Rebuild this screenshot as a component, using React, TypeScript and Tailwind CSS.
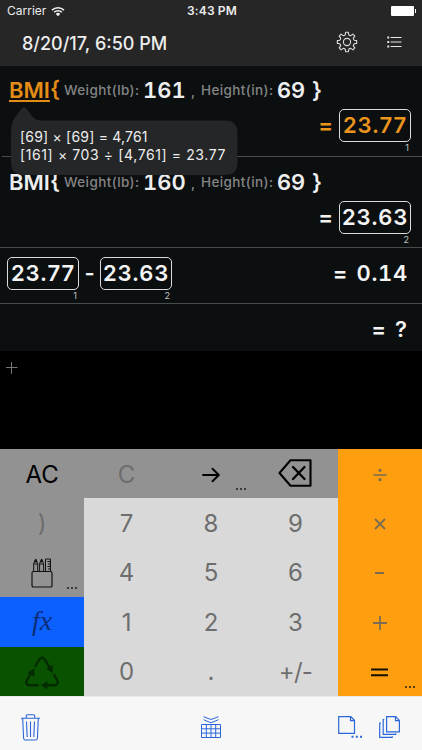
import type { ReactNode } from "react";

function Wifi() {
  return (
    <svg width="14" height="11" viewBox="0 0 14 11" fill="none" stroke="#f2f2f2" strokeWidth="1.5">
      <path d="M1 4.1a8.6 8.6 0 0 1 12 0" />
      <path d="M3.1 6.3a5.6 5.6 0 0 1 7.8 0" />
      <path d="M7 10.2 4.8 7.9a3.2 3.2 0 0 1 4.4 0z" fill="#f2f2f2" stroke="none" />
    </svg>
  );
}

function Gear() {
  const teeth: string[] = [];
  for (let i = 0; i < 8; i++) {
    const at = (r: number, deg: number) => {
      const a = ((i * 45 + deg - 90) * Math.PI) / 180;
      return `${(11 + r * Math.cos(a)).toFixed(2)} ${(11 + r * Math.sin(a)).toFixed(2)}`;
    };
    teeth.push(`${at(7.4, -14)} L${at(9.8, -8)} L${at(9.8, 8)} L${at(7.4, 14)} Q${at(6.9, 22.5)} ${at(7.4, 31)}`);
  }
  return (
    <svg className="mb-[2px]" width="22" height="22" viewBox="0 0 22 22" fill="none" stroke="#dedede" strokeWidth="1.1" strokeLinejoin="round">
      <path d={`M${teeth.join(" L")}Z`} />
      <circle cx="11" cy="11" r="3.6" />
    </svg>
  );
}

function ListIcon() {
  return (
    <svg className="mb-[2px]" width="15" height="12" viewBox="0 0 15 12" stroke="#e6e6e6" strokeWidth="1.1">
      <path d="M3.6 1.5H14.5M3.6 6H14.5M3.6 10.5H14.5" />
      <path d="M.3 1.5h1.9M.3 6h1.9M.3 10.5h1.9" strokeWidth="1.9" />
    </svg>
  );
}

function Result({ value, index, orange = false }: { value: string; index: string; orange?: boolean }) {
  return (
    <div className="relative flex h-[33px] w-[72px] items-center justify-center rounded-[5px] border border-[#dcdcdc]">
      <span className={`whitespace-nowrap text-[22px] font-semibold tracking-[0.9px] ${orange ? "text-[#ec951e]" : "text-[#f4f4f4]"}`}>{value}</span>
      <span className="absolute right-[1px] top-[32px] text-[9px] leading-[11px] text-[#c4c4c4]">{index}</span>
    </div>
  );
}

function Formula({ weight, active = false }: { weight: string; active?: boolean }) {
  return (
    <div className="flex h-[30px] items-center whitespace-nowrap pl-[9px] text-[22px] font-semibold text-[#eeeeee]">
      <span className={`w-[55px] ${active ? "text-[#e58c16]" : ""}`}>
        <span className={active ? "underline decoration-[1.5px] underline-offset-[2px]" : ""}>BMI</span>{"{"}
      </span>
      <span className="w-[79px] text-[13.5px] font-medium tracking-[0.4px] text-[#858585]">Weight(lb):</span>
      <span className="w-[48px] tabular-nums">{weight}</span>
      <span className="w-[10px] text-[14px] font-normal text-[#9a9a9a]">,</span>
      <span className="w-[75px] text-[13.5px] font-medium tracking-[0.4px] text-[#858585]">Height(in):</span>
      <span className="w-[36px] pl-px">69</span>
      <span>{"}"}</span>
    </div>
  );
}

function Equals({ orange = false }: { orange?: boolean }) {
  return <span className={`text-[22px] font-semibold ${orange ? "text-[#ec951e]" : "text-[#f4f4f4]"}`}>=</span>;
}

function Key({ children, tone = "", dots = false }: { children: ReactNode; tone?: string; dots?: boolean }) {
  return (
    <div className={`relative flex items-center justify-center pt-[2px] text-[24px] ${tone}`}>
      {children}
      {dots && (
        <svg className="absolute bottom-[8px] right-[7px]" width="10" height="2" viewBox="0 0 10 2" fill="#111">
          <circle cx="1" cy="1" r=".9" /><circle cx="5" cy="1" r=".9" /><circle cx="9" cy="1" r=".9" />
        </svg>
      )}
    </div>
  );
}

const grey = "bg-[#929292] text-[#6d6d6d]";
const light = "bg-[#d9d9d9] text-[#6e6e6e]";
const amber = "bg-[#ff9f10] text-[#7c6c50]";

function Keypad() {
  return (
    <div className="grid h-[247px] grid-cols-5 grid-rows-5">
      <Key tone="bg-[#929292] text-black">AC</Key>
      <Key tone={grey}>C</Key>
      <Key tone={grey} dots>
        <svg width="18" height="16" viewBox="0 0 18 16" fill="none" stroke="#000" strokeWidth="1.9" strokeLinecap="round" strokeLinejoin="round"><path d="M1 8H16.5M10.5 1.8 16.8 8l-6.3 6.2" /></svg>
      </Key>
      <Key tone={grey}>
        <svg className="mb-[3px]" width="34" height="28" viewBox="0 0 34 28" fill="none" stroke="#000" strokeWidth="2.1" strokeLinecap="round" strokeLinejoin="round"><path d="M12.5 1.2H32.5V26.8H12.5L1.5 14Z" /><path d="m15 8 11.5 12M26.5 8 15 20" strokeWidth="2.3" /></svg>
      </Key>
      <Key tone={amber}>
        <svg width="14" height="14" viewBox="0 0 14 14" fill="#7c6c50"><path d="M.5 6.2h13v1.6H.5z" /><circle cx="7" cy="2.3" r="1.6" /><circle cx="7" cy="11.7" r="1.6" /></svg>
      </Key>

      <Key tone={grey}>)</Key>
      <Key tone={light}>7</Key>
      <Key tone={light}>8</Key>
      <Key tone={light}>9</Key>
      <Key tone={amber}>
        <svg width="12" height="12" viewBox="0 0 12 12" stroke="#7c6c50" strokeWidth="1.9"><path d="m1 1 10 10M11 1 1 11" /></svg>
      </Key>

      <Key tone={grey} dots>
        <svg width="22" height="30" viewBox="0 0 22 30" fill="none" stroke="#111" strokeWidth="1.2">
          <rect x="1" y="13.5" width="20" height="15.5" rx="1.6" />
          <path d="M2.7 13.5V5.5L4.7 1l2 4.5v8M8.6 13.5V5.5l2-4.5 2 4.5v8M2.7 6h4M8.6 6h4M14.5 13.5V1h5v12.5M16.5 3.5h3M17 6h2.5M16.5 8.5h3M17 11h2.5" strokeWidth="1" />
          <path d="m3.7 4 1-3 1 3zM9.6 4l1-3 1 3z" fill="#111" strokeWidth=".7" />
        </svg>
      </Key>
      <Key tone={light}>4</Key>
      <Key tone={light}>5</Key>
      <Key tone={light}>6</Key>
      <Key tone={amber}><span className="h-[2px] w-[9px] bg-[#7c6c50]" /></Key>

      <Key tone="bg-[#0c60ff] text-[#0b2e78]">
        <span className="-mt-[4px] font-['Liberation_Serif',serif] text-[28px] italic leading-none">fx</span>
      </Key>
      <Key tone={light}>1</Key>
      <Key tone={light}>2</Key>
      <Key tone={light}>3</Key>
      <Key tone={amber}>
        <svg width="14" height="14" viewBox="0 0 14 14" stroke="#7c6c50" strokeWidth="1.8"><path d="M0 7h14M7 0v14" /></svg>
      </Key>

      <Key tone="bg-[#085200] text-[#042a02]">
        <svg width="34" height="33" viewBox="0 0 34 33" fill="none" stroke="#042a02" strokeWidth="2.4" strokeLinecap="round">
          <path d="M10.5 10 13.8 4Q17 -.8 20.2 4L24.5 11.5M29.3 19 32 24Q34.2 29 29 29.3H23M12.5 29.3H5Q-.2 29 2 24L5.5 18" />
          <path d="m21 12.6 6.7-3.5-.2 7.8zM22.5 25.2v8l-6.8-4zM2.3 16.7l7-4.1.2 8z" fill="#042a02" stroke="none" />
        </svg>
      </Key>
      <Key tone={light}>0</Key>
      <Key tone={light}>.</Key>
      <Key tone={light}><span className="tracking-[-0.8px]">+/-</span></Key>
      <Key tone={amber} dots>
        <svg width="17" height="9" viewBox="0 0 17 9" stroke="#151006" strokeWidth="1.9"><path d="M0 1.5h17M0 7.2h17" /></svg>
      </Key>
    </div>
  );
}

function Toolbar() {
  return (
    <div className="flex h-[54px] items-start border-t border-[#e9e9e9] bg-[#f7f7f7] pl-[21px] pt-[16px]">
      <svg className="mt-px" width="19" height="27" viewBox="0 0 19 27" fill="none" stroke="#2b67da" strokeWidth="1.1">
        <path d="M0 4.3h19M5.3 4V1.7Q5.3.7 6.3.7h6.4q1 0 1 1V4M1.7 4.5 2.6 24.2Q2.7 26 4.5 26h10q1.8 0 1.9-1.8L17.3 4.5M5.5 7.5l.7 15.5M9.5 7.5V23M13.5 7.5 12.8 23" />
      </svg>
      <svg className="ml-[161px] mt-[3px]" width="20" height="23" viewBox="0 0 20 23" fill="none" stroke="#2b67da" strokeWidth="1">
        <path d="m2.5.7 7.5 2.8L17.5.7M2.5 3.7 10 6.8l7.5-3.1" />
        <path d="M.5 8.5h19v13H.5zM.5 12.8h19M.5 17.1h19M5.3 8.5v13M10 8.5v13M14.7 8.5v13" />
      </svg>
      <svg className="ml-[117px] mt-[2px]" width="24" height="24" viewBox="0 0 24 24" fill="none" stroke="#2b67da" strokeWidth="1.2">
        <path d="M.7 1.7h12.1l3.7 3.6v13H.7zM12.5 1.7v4h4" />
        <path d="M13.5 21.7h2M17.8 21.7h2M22 21.7h2" strokeWidth="2" />
      </svg>
      <svg className="ml-[17px] mt-[3px]" width="22" height="23" viewBox="0 0 22 23" fill="none" stroke="#2b67da" strokeWidth="1.2">
        <path d="M7.6.7h9.1l3.7 3.7v11.4H7.6zM16.5.7v4h4M5.3 3.7H4.2v14.7h12.5v-1.1M2 7H.7v14.3h12.5v-1.1" />
      </svg>
    </div>
  );
}

export default function App() {
  return (
    <div className="flex h-[750px] w-[422px] flex-col overflow-hidden bg-black font-['Inter',sans-serif]">
      <header className="h-[66px] bg-[#262626]">
        <div className="flex h-[22px] items-center justify-between pl-[7px] pr-[6px] text-[12px] text-[#ececec]">
          <div className="flex w-[150px] items-center gap-[5px]"><span>Carrier</span><Wifi /></div>
          <span className="pl-px font-semibold tracking-[0.15px]">3:43 PM</span>
          <div className="flex w-[150px] items-center justify-end gap-px">
            <span className="h-[10px] w-[23px] rounded-[1px] bg-white" /><span className="h-[4px] w-px bg-white" />
          </div>
        </div>
        <div className="flex h-[42px] items-center pl-[22px] text-[18px] font-medium text-[#ededed]">
          <span className="flex-1 whitespace-nowrap">8/20/17, 6:50 PM</span>
          <Gear />
          <span className="ml-[29px] mr-[20px]"><ListIcon /></span>
        </div>
      </header>

      <main className="h-[285px] bg-[#0b0f10]">
        <section className="relative h-[91px] pt-[9px]">
          <Formula weight="161" active />
          <div className="mt-[4px] flex items-center justify-end gap-[6px] pr-[11px]"><Equals orange /><Result value="23.77" index="1" orange /></div>
          <div className="absolute bottom-0 left-[2px] right-0 h-px bg-[#484b4c]" />
          <div className="absolute left-[11px] top-[41px] z-10 h-[68px] w-[227px]">
            <svg className="absolute inset-0" width="227" height="68" viewBox="0 0 227 68" fill="#242627">
              <path d="M0 25Q0 15 5 9L10 2.5Q13 -1.5 16 2.5L21 9Q24 13.5 31 13.5H214Q226.5 13.5 226.5 26V55.5Q226.5 68 214 68H13Q0 68 0 55.5Z" />
            </svg>
            <div className="relative whitespace-nowrap pl-[9px] pt-[21px] text-[14px] leading-[18px] text-[#eeeeee]">
              <p className="tracking-[0.2px]">[69] × [69] = 4,761</p>
              <p className="tracking-[0.61px]">[161] × 703 ÷ [4,761] = 23.77</p>
            </div>
          </div>
        </section>
        <section className="h-[91px] border-b border-[#484b4c] pt-[10px]">
          <Formula weight="160" />
          <div className="mt-[4px] flex items-center justify-end gap-[6px] pr-[11px]"><Equals /><Result value="23.63" index="2" /></div>
        </section>
        <section className="flex h-[56px] items-start border-b border-[#484b4c] pl-[7px] pr-[14px] pt-[9px]">
          <Result value="23.77" index="1" />
          <span className="w-[21px] text-center text-[22px] font-semibold leading-[33px] text-[#f4f4f4]">-</span>
          <Result value="23.63" index="2" />
          <span className="ml-auto text-[22px] font-semibold leading-[32px] tracking-[0.7px] tabular-nums text-[#f4f4f4]"><span className="mr-[2px]">=</span> 0.14</span>
        </section>
        <section className="flex h-[47px] items-center justify-end pr-[14px] pt-[3px] text-[22px] font-semibold tracking-[1px] text-[#f4f4f4]"><span className="mr-[8px]">=</span>?</section>
      </main>

      <div className="h-[98px] pl-[6px] pt-[11px]">
        <svg width="12" height="12" viewBox="0 0 12 12" stroke="#777" strokeWidth="1"><path d="M0 5.5h11.5M5.5 0v12" /></svg>
      </div>
      <Keypad />
      <Toolbar />
    </div>
  );
}
